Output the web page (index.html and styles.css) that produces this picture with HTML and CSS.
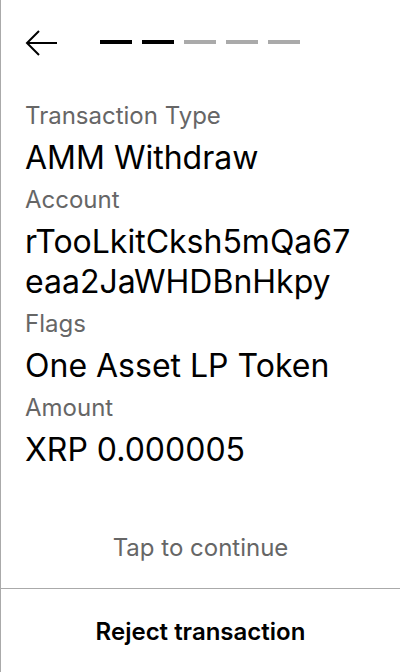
FILE: index.html
```html
<!DOCTYPE html>
<html>
<head>
<meta charset="utf-8">
<link rel="stylesheet" href="styles.css">
</head>
<body>
<div class="screen">
  <div class="header">
    <svg class="back" width="34" height="28" viewBox="0 0 34 28">
      <path d="M33 14H3M15 2L3 14L15 26" fill="none" stroke="#000" stroke-width="2"/>
    </svg>
    <div class="steps">
      <span class="step done"></span>
      <span class="step done"></span>
      <span class="step"></span>
      <span class="step"></span>
      <span class="step"></span>
    </div>
  </div>
  <div class="content">
    <div class="field">
      <div class="label">Transaction Type</div>
      <div class="value">AMM Withdraw</div>
    </div>
    <div class="field">
      <div class="label">Account</div>
      <div class="value">rTooLkitCksh5mQa67<br>eaa2JaWHDBnHkpy</div>
    </div>
    <div class="field">
      <div class="label">Flags</div>
      <div class="value">One Asset LP Token</div>
    </div>
    <div class="field">
      <div class="label">Amount</div>
      <div class="value">XRP 0.000005</div>
    </div>
  </div>
  <div class="tap">Tap to continue</div>
  <div class="reject">Reject transaction</div>
</div>
</body>
</html>
```
FILE: styles.css
```css
html, body {
  margin: 0;
  padding: 0;
  background: #fff;
}
.screen {
  width: 400px;
  height: 672px;
  box-sizing: border-box;
  border-left: 1px solid #aaa;
  display: flex;
  flex-direction: column;
  font-family: Inter, "Noto Sans", sans-serif;
  color: #000;
}
.header {
  display: flex;
  align-items: center;
  padding: 29px 0 0 23px;
  height: 28px;
}
.back {
  display: block;
}
.steps {
  display: flex;
  gap: 10px;
  margin-left: 42px;
  margin-top: -3px;
}
.step {
  width: 32px;
  height: 4px;
  background: #aaa;
}
.step.done {
  background: #000;
}
.content {
  padding: 45px 0 0 24px;
  flex: 1;
}
.field {
  margin-bottom: 8px;
}
.label {
  font-size: 24px;
  line-height: 28px;
  color: #666;
}
.value {
  font-size: 32px;
  line-height: 40px;
  margin-top: 8px;
}
.tap {
  text-align: center;
  font-size: 24px;
  line-height: 28px;
  color: #666;
  padding-bottom: 26px;
}
.reject {
  border-top: 1px solid #aaa;
  text-align: center;
  font-size: 24px;
  font-weight: 600;
  height: 83px;
  line-height: 85px;
}
```
